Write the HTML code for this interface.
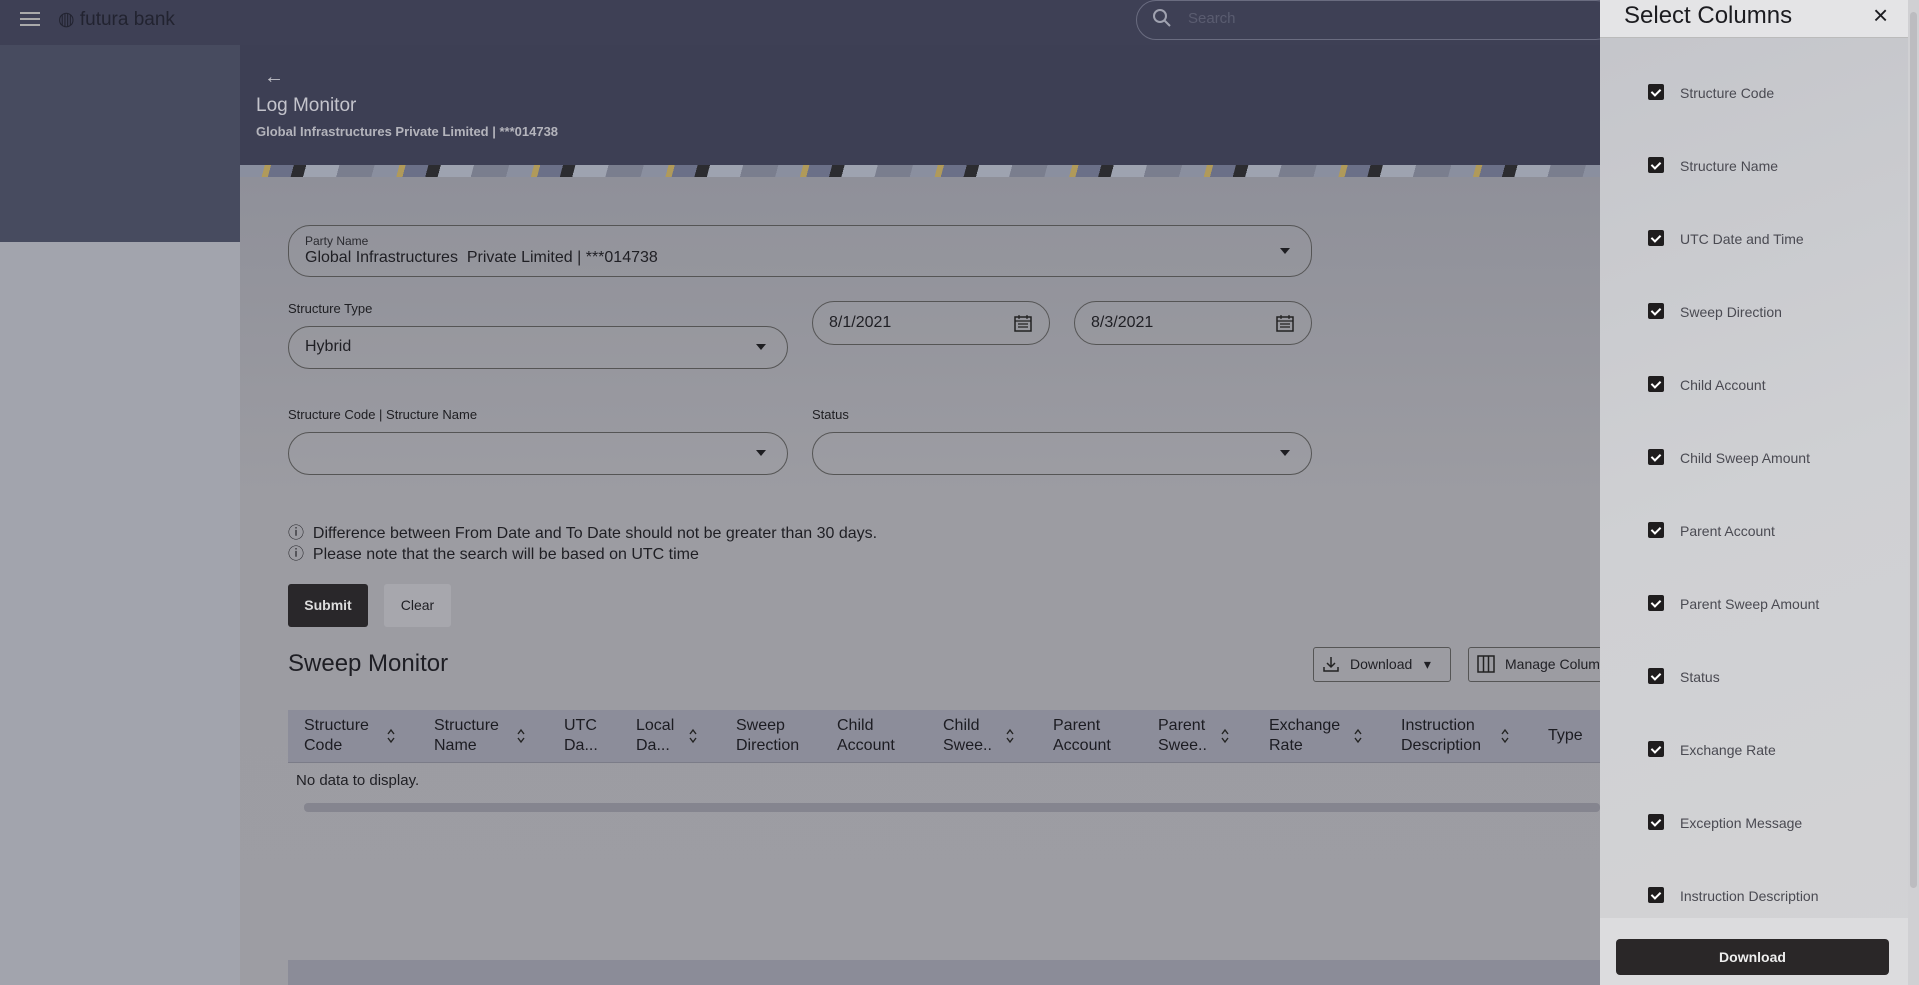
<!DOCTYPE html>
<html><head><meta charset="utf-8"><style>
*{box-sizing:border-box;margin:0;padding:0}
body{width:1919px;height:985px;overflow:hidden;position:relative;font-family:"Liberation Sans",sans-serif;background:#a2a4ad;color:#1f1f24}
.abs{position:absolute}
.top{left:0;top:0;width:1919px;height:45px;background:#3e4055}
.side{left:0;top:45px;width:240px;height:197px;background:#474b5f}
.hdr{left:240px;top:45px;width:1360px;height:120px;background:#3d3f54}
.strip{left:240px;top:165px;width:1360px;height:12px;background:repeating-linear-gradient(105deg,#8a8f9f 0 24px,#b09a5a 24px 30px,#6b7088 30px 52px,#2c2c30 52px 64px,#9ea3b0 64px 96px,#7a7e8e 96px 130px)}
.content{left:240px;top:177px;width:1360px;height:808px;background:linear-gradient(180deg,#8f9099,#9c9ca2 40%,#9d9da3)}
.box{border:1px solid #555;border-radius:22px;background:rgba(255,255,255,0.02)}
.lbl{font-size:13px;color:#1e1e22}
.tri{width:0;height:0;border-left:5px solid transparent;border-right:5px solid transparent;border-top:6px solid #1e1e22}
.th{font-size:16px;line-height:20px;color:#1c1c22}
.panel{left:1600px;top:0;width:308px;height:985px;background:linear-gradient(160deg,#c4c5ca,#cfd0d3 50%,#d3d3d5)}
.ph{left:1600px;top:0;width:308px;height:38px;background:#e4e4e6;border-bottom:1px solid #bbb}
.cb{width:16px;height:16px;background:#1f1d1e;border-radius:2px}
.cb::after{content:"";position:absolute;left:5px;top:3px;width:4px;height:7px;border:solid #fff;border-width:0 2px 2px 0;transform:rotate(45deg)}
.ci{font-size:14px;color:#4a4a52}
.srt{position:absolute;width:10px;height:16px}
</style></head><body>
<div class="abs top"></div>
<div class="abs" style="left:20px;top:12px;width:20px;height:2px;background:#aaa;box-shadow:0 6px 0 #aaa,0 12px 0 #aaa"></div>
<div class="abs" style="left:58px;top:8px;font-size:19px;color:#222330">◍ futura bank</div>
<div class="abs" style="left:1136px;top:0;width:480px;height:40px;border:1px solid #6a6c80;border-radius:20px"></div>
<svg class="abs" style="left:1152px;top:8px" width="20" height="20"><circle cx="8" cy="8" r="6" fill="none" stroke="#a0a2b0" stroke-width="2"/><path d="M12.5 12.5L18 18" stroke="#a0a2b0" stroke-width="2"/></svg>
<div class="abs" style="left:1188px;top:10px;font-size:15px;color:#5a5c70">Search</div>
<div class="abs side"></div>
<div class="abs hdr"></div>
<div class="abs" style="left:264px;top:66px;font-size:20px;color:#c0c0c8">←</div>
<div class="abs" style="left:256px;top:95px;font-size:19px;color:#c4c4cc">Log Monitor</div>
<div class="abs" style="left:256px;top:124px;font-size:13px;font-weight:bold;color:#b4b4bc">Global Infrastructures Private Limited | ***014738</div>
<div class="abs strip"></div>
<div class="abs content"></div>

<div class="abs box" style="left:288px;top:225px;width:1024px;height:52px"></div>
<div class="abs lbl" style="left:305px;top:234px;font-size:12px;color:#2a2a30">Party Name</div>
<div class="abs" style="left:305px;top:249px;font-size:16px">Global Infrastructures&nbsp; Private Limited | ***014738</div>
<div class="abs tri" style="left:1280px;top:248px"></div>

<div class="abs lbl" style="left:288px;top:301px">Structure Type</div>
<div class="abs box" style="left:288px;top:326px;width:500px;height:43px"></div>
<div class="abs" style="left:305px;top:338px;font-size:16px">Hybrid</div>
<div class="abs tri" style="left:756px;top:344px"></div>

<div class="abs box" style="left:812px;top:301px;width:238px;height:44px"></div>
<div class="abs" style="left:829px;top:314px;font-size:16px">8/1/2021</div>
<div class="abs box" style="left:1074px;top:301px;width:238px;height:44px"></div>
<div class="abs" style="left:1091px;top:314px;font-size:16px">8/3/2021</div>
<svg class="abs" style="left:1013px;top:313px" width="20" height="20"><rect x="2" y="4" width="16" height="14" fill="none" stroke="#222" stroke-width="1.5"/><path d="M2 8h16M6 2v4M14 2v4M5 11h10M5 14h10" stroke="#222" stroke-width="1.2"/></svg>
<svg class="abs" style="left:1275px;top:313px" width="20" height="20"><rect x="2" y="4" width="16" height="14" fill="none" stroke="#222" stroke-width="1.5"/><path d="M2 8h16M6 2v4M14 2v4M5 11h10M5 14h10" stroke="#222" stroke-width="1.2"/></svg>

<div class="abs lbl" style="left:288px;top:407px">Structure Code | Structure Name</div>
<div class="abs lbl" style="left:812px;top:407px">Status</div>
<div class="abs box" style="left:288px;top:432px;width:500px;height:43px"></div>
<div class="abs tri" style="left:756px;top:450px"></div>
<div class="abs box" style="left:812px;top:432px;width:500px;height:43px"></div>
<div class="abs tri" style="left:1280px;top:450px"></div>

<div class="abs" style="left:288px;top:523px;font-size:16px;line-height:21px">ⓘ&nbsp; Difference between From Date and To Date should not be greater than 30 days.<br>ⓘ&nbsp; Please note that the search will be based on UTC time</div>
<div class="abs" style="left:288px;top:584px;width:80px;height:43px;background:#29272a;border-radius:3px;color:#ddd;font-size:14px;font-weight:bold;text-align:center;line-height:43px">Submit</div>
<div class="abs" style="left:384px;top:584px;width:67px;height:43px;background:#a7a7ad;border-radius:3px;font-size:14px;text-align:center;line-height:43px">Clear</div>

<div class="abs" style="left:288px;top:650px;font-size:24px;color:#1e1e24">Sweep Monitor</div>
<div class="abs" style="left:1313px;top:647px;width:138px;height:35px;border:1px solid #555;border-radius:3px;font-size:14px;line-height:33px;padding-left:36px">Download&nbsp;&nbsp; ▾</div>
<svg class="abs" style="left:1322px;top:655px" width="18" height="18"><path d="M9 2v10M5 8l4 4 4-4M2 12v4h14v-4" fill="none" stroke="#222" stroke-width="1.5"/></svg>
<div class="abs" style="left:1468px;top:647px;width:140px;height:35px;border:1px solid #555;border-radius:3px;font-size:14px;line-height:33px;padding-left:36px;overflow:hidden;white-space:nowrap">Manage Columns</div>
<svg class="abs" style="left:1477px;top:655px" width="18" height="18"><rect x="1" y="1" width="16" height="16" fill="none" stroke="#222" stroke-width="1.5"/><path d="M6.5 1v16M11.5 1v16" stroke="#222" stroke-width="1.5"/></svg>

<div class="abs" style="left:288px;top:710px;width:1312px;height:53px;background:#8c8d9a;border-bottom:1px solid #7b7c88"></div>
<div class="abs th" style="left:304px;top:716px">Structure<br>Code</div>
<div class="abs th" style="left:434px;top:716px">Structure<br>Name</div>
<div class="abs th" style="left:564px;top:716px">UTC<br>Da...</div>
<div class="abs th" style="left:636px;top:716px">Local<br>Da...</div>
<div class="abs th" style="left:736px;top:716px">Sweep<br>Direction</div>
<div class="abs th" style="left:837px;top:716px">Child<br>Account</div>
<div class="abs th" style="left:943px;top:716px">Child<br>Swee..</div>
<div class="abs th" style="left:1053px;top:716px">Parent<br>Account</div>
<div class="abs th" style="left:1158px;top:716px">Parent<br>Swee..</div>
<div class="abs th" style="left:1269px;top:716px">Exchange<br>Rate</div>
<div class="abs th" style="left:1401px;top:716px">Instruction<br>Description</div>
<div class="abs th" style="left:1548px;top:726px">Type</div>
<svg class="srt" style="left:386px;top:728px" viewBox="0 0 10 16"><path d="M2 6l3-4 3 4M2 10l3 4 3-4" fill="none" stroke="#222" stroke-width="1.4"/></svg>
<svg class="srt" style="left:516px;top:728px" viewBox="0 0 10 16"><path d="M2 6l3-4 3 4M2 10l3 4 3-4" fill="none" stroke="#222" stroke-width="1.4"/></svg>
<svg class="srt" style="left:688px;top:728px" viewBox="0 0 10 16"><path d="M2 6l3-4 3 4M2 10l3 4 3-4" fill="none" stroke="#222" stroke-width="1.4"/></svg>
<svg class="srt" style="left:1005px;top:728px" viewBox="0 0 10 16"><path d="M2 6l3-4 3 4M2 10l3 4 3-4" fill="none" stroke="#222" stroke-width="1.4"/></svg>
<svg class="srt" style="left:1220px;top:728px" viewBox="0 0 10 16"><path d="M2 6l3-4 3 4M2 10l3 4 3-4" fill="none" stroke="#222" stroke-width="1.4"/></svg>
<svg class="srt" style="left:1353px;top:728px" viewBox="0 0 10 16"><path d="M2 6l3-4 3 4M2 10l3 4 3-4" fill="none" stroke="#222" stroke-width="1.4"/></svg>
<svg class="srt" style="left:1500px;top:728px" viewBox="0 0 10 16"><path d="M2 6l3-4 3 4M2 10l3 4 3-4" fill="none" stroke="#222" stroke-width="1.4"/></svg>
<div class="abs" style="left:296px;top:772px;font-size:15px">No data to display.</div>
<div class="abs" style="left:304px;top:803px;width:1296px;height:9px;background:#85858f;border-radius:4px"></div>
<div class="abs" style="left:288px;top:960px;width:1312px;height:25px;background:#8b8c98"></div>

<div class="abs panel"></div>
<div class="abs ph"></div>
<div class="abs" style="left:1624px;top:2px;font-size:24px;color:#1c1c20">Select Columns</div>
<div class="abs" style="left:1873px;top:0px;font-size:26px;color:#1c1c20">×</div>
<div class="abs" style="left:1908px;top:0;width:11px;height:985px;background:#d0d0d3"></div>
<div class="abs" style="left:1910px;top:12px;width:7px;height:876px;background:#bcbcc0;border-radius:4px"></div>

<div class="abs cb" style="left:1648px;top:84px"></div><div class="abs ci" style="left:1680px;top:85px">Structure Code</div>
<div class="abs cb" style="left:1648px;top:157px"></div><div class="abs ci" style="left:1680px;top:158px">Structure Name</div>
<div class="abs cb" style="left:1648px;top:230px"></div><div class="abs ci" style="left:1680px;top:231px">UTC Date and Time</div>
<div class="abs cb" style="left:1648px;top:303px"></div><div class="abs ci" style="left:1680px;top:304px">Sweep Direction</div>
<div class="abs cb" style="left:1648px;top:376px"></div><div class="abs ci" style="left:1680px;top:377px">Child Account</div>
<div class="abs cb" style="left:1648px;top:449px"></div><div class="abs ci" style="left:1680px;top:450px">Child Sweep Amount</div>
<div class="abs cb" style="left:1648px;top:522px"></div><div class="abs ci" style="left:1680px;top:523px">Parent Account</div>
<div class="abs cb" style="left:1648px;top:595px"></div><div class="abs ci" style="left:1680px;top:596px">Parent Sweep Amount</div>
<div class="abs cb" style="left:1648px;top:668px"></div><div class="abs ci" style="left:1680px;top:669px">Status</div>
<div class="abs cb" style="left:1648px;top:741px"></div><div class="abs ci" style="left:1680px;top:742px">Exchange Rate</div>
<div class="abs cb" style="left:1648px;top:814px"></div><div class="abs ci" style="left:1680px;top:815px">Exception Message</div>
<div class="abs cb" style="left:1648px;top:887px"></div><div class="abs ci" style="left:1680px;top:888px">Instruction Description</div>
<div class="abs" style="left:1600px;top:918px;width:308px;height:67px;background:#dcdcde"></div>
<div class="abs" style="left:1616px;top:939px;width:273px;height:36px;background:#2a2728;border-radius:4px;color:#eee;font-size:14px;font-weight:bold;text-align:center;line-height:36px">Download</div>
</body></html>
